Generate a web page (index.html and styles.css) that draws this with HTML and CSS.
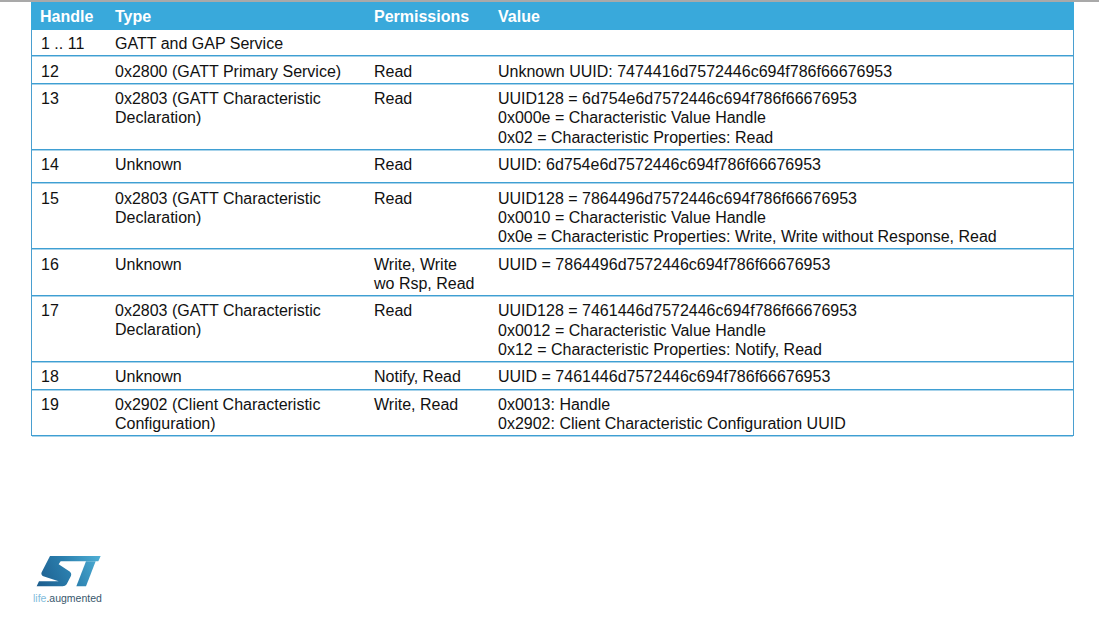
FILE: index.html
```html
<!DOCTYPE html>
<html lang="en">
<head>
<meta charset="utf-8">
<title>GATT table</title>
<link rel="stylesheet" href="styles.css">
</head>
<body>
<div class="page">
  <div class="table">
    <div class="row head"><div>Handle</div><div>Type</div><div>Permissions</div><div>Value</div></div>
    <div class="row h27"><div>1 .. 11</div><div>GATT and GAP Service</div><div></div><div></div></div>
    <div class="row h28"><div>12</div><div>0x2800 (GATT Primary Service)</div><div>Read</div><div>Unknown UUID: 7474416d7572446c694f786f66676953</div></div>
    <div class="row h66"><div>13</div><div>0x2803 (GATT Characteristic<br>Declaration)</div><div>Read</div><div class="val up">UUID128 = 6d754e6d7572446c694f786f66676953<br>0x000e = Characteristic Value Handle<br>0x02 = Characteristic Properties: Read</div></div>
    <div class="row h33"><div>14</div><div>Unknown</div><div>Read</div><div>UUID: 6d754e6d7572446c694f786f66676953</div></div>
    <div class="row h66 p5"><div>15</div><div>0x2803 (GATT Characteristic<br>Declaration)</div><div>Read</div><div>UUID128 = 7864496d7572446c694f786f66676953<br>0x0010 = Characteristic Value Handle<br>0x0e = Characteristic Properties: Write, Write without Response, Read</div></div>
    <div class="row h47"><div>16</div><div>Unknown</div><div>Write, Write<br>wo Rsp, Read</div><div>UUID = 7864496d7572446c694f786f66676953</div></div>
    <div class="row h66"><div>17</div><div>0x2803 (GATT Characteristic<br>Declaration)</div><div>Read</div><div class="val">UUID128 = 7461446d7572446c694f786f66676953<br>0x0012 = Characteristic Value Handle<br>0x12 = Characteristic Properties: Notify, Read</div></div>
    <div class="row h28 p4"><div>18</div><div>Unknown</div><div>Notify, Read</div><div>UUID = 7461446d7572446c694f786f66676953</div></div>
    <div class="row h46 p4"><div>19</div><div>0x2902 (Client Characteristic<br>Configuration)</div><div>Write, Read</div><div>0x0013: Handle<br>0x2902: Client Characteristic Configuration UUID</div></div>
  </div>
  <div class="logo">
    <svg class="mark" width="76" height="40" viewBox="0 0 228 120" aria-hidden="true">
      <defs>
        <linearGradient id="stg" gradientUnits="userSpaceOnUse" x1="20" y1="106" x2="212" y2="15">
          <stop offset="0" stop-color="#1c5c8c"/>
          <stop offset="0.5" stop-color="#2b7fae"/>
          <stop offset="1" stop-color="#4fb0d6"/>
        </linearGradient>
      </defs>
      <path fill="url(#stg)" d="M60 15H212L205 31H92L86 40 120 62C126 68 124 74 120 80L110 100Q106 106 98 106H20L27 91H86L40 76C34 73 33 68 35 64Z"/>
      <path fill="url(#stg)" d="M168 31H197L168 106H139Z"/>
    </svg>
    <div class="tag"><span class="life">life</span>.augmented</div>
  </div>
</div>
</body>
</html>
```
FILE: styles.css
```css
html, body {
  margin: 0;
  padding: 0;
  background: #fff;
}
.page {
  position: relative;
  box-sizing: border-box;
  width: 1099px;
  height: 620px;
  overflow: hidden;
  padding: 2px 25px 0 31px;
  font-family: "Liberation Sans", Arial, sans-serif;
  color: #111;
  background: linear-gradient(#a9a9a9 0 2px, #fff 2px);
}
.table {
  width: 1043px;
  border-left: 1px solid #4a9fd0;
  border-right: 1px solid #4a9fd0;
  box-sizing: border-box;
}
.row {
  display: grid;
  grid-template-columns: 83px 259px 124px 1fr;
  box-sizing: border-box;
  border-bottom: 1px solid #3f9fd3;
  box-shadow: 0 1px 0 #a8d3ea;
  font-size: 16px;
  line-height: 19px;
  padding-top: 5px;
  margin-bottom: 1px;
}
.row > div:first-child {
  padding-left: 9px;
}
.val {
  line-height: 19.5px;
}
.up {
  margin-top: -0.25px;
}
.head {
  height: 28px;
  margin: 0 -1px;
  grid-template-columns: 84px 259px 124px 1fr;
  background: #39a9db;
  color: #fff;
  font-weight: bold;
  border-bottom: 0;
  box-shadow: none;
  margin-bottom: 0;
}
.h27 { height: 26px; padding-top: 4px; }
.h28 { height: 27px; }
.h66 { height: 65px; padding-top: 4px; }
.h33 { height: 32px; padding-top: 4px; }
.h47 { height: 46px; }
.h46 { height: 45px; }
.p5 { padding-top: 5px; }
.p4 { padding-top: 4px; }
.logo {
  margin-top: 115px;
  margin-left: -1px;
}
.mark {
  display: block;
}
.tag {
  margin-top: 1px;
  margin-left: 3px;
  font-size: 10.5px;
  line-height: 12px;
  color: #37576c;
  white-space: nowrap;
}
.life {
  color: #7fbcdc;
}
```
